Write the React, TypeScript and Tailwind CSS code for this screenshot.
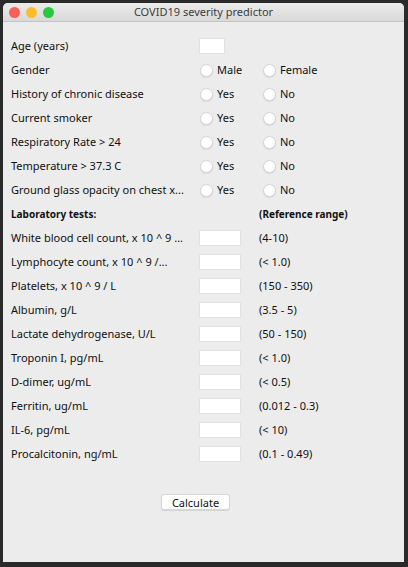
const YES_NO = [
  "History of chronic disease",
  "Current smoker",
  "Respiratory Rate > 24",
  "Temperature > 37.3 C",
  "Ground glass opacity on chest x...",
];

const LAB_TESTS: { label: string; range: string }[] = [
  { label: "White blood cell count, x 10 ^ 9 ...", range: "(4-10)" },
  { label: "Lymphocyte count, x 10 ^ 9 /...", range: "(< 1.0)" },
  { label: "Platelets, x 10 ^ 9 / L", range: "(150 - 350)" },
  { label: "Albumin, g/L", range: "(3.5 - 5)" },
  { label: "Lactate dehydrogenase, U/L", range: "(50 - 150)" },
  { label: "Troponin I, pg/mL", range: "(< 1.0)" },
  { label: "D-dimer, ug/mL", range: "(< 0.5)" },
  { label: "Ferritin, ug/mL", range: "(0.012 - 0.3)" },
  { label: "IL-6, pg/mL", range: "(< 10)" },
  { label: "Procalcitonin, ng/mL", range: "(0.1 - 0.49)" },
];

function Radio({ label }: { label: string }) {
  return (
    <div className="flex items-center w-[63px]">
      <span className="w-[13px] h-[13px] rounded-full bg-white border border-[#d4d4d4] shadow-[0_1px_1px_rgba(0,0,0,0.08)] shrink-0" />
      <span className="ml-[4px]">{label}</span>
    </div>
  );
}

function Row({ label, bold, children }: { label: string; bold?: boolean; children?: React.ReactNode }) {
  return (
    <div className="flex items-center h-[24px]">
      <div className={`w-[188px] shrink-0 whitespace-nowrap ${bold ? "font-bold text-[10px]" : ""}`}>{label}</div>
      {children}
    </div>
  );
}

function TextBox({ w }: { w: string }) {
  return <div className={`${w} h-[16px] bg-white border border-[#e2e2e2]`} />;
}

export default function App() {
  return (
    <div
      className="w-[408px] h-[567px] bg-[#2a2a2a] pt-[3px] pl-[3px] overflow-hidden"
      style={{ fontFamily: '"Noto Sans", "DejaVu Sans", sans-serif' }}
    >
      <div className="w-[401px] h-[559px] bg-[#ececec] rounded-t-[5px] overflow-hidden text-[11px] text-[#111]">
        {/* title bar */}
        <div className="relative h-[19px] bg-gradient-to-b from-[#ebebeb] to-[#d9d9d9] border-b border-[#c4c4c4] flex items-center justify-center">
          <div className="absolute left-[6px] top-[4px] flex gap-[6px]">
            <span className="w-[11px] h-[11px] rounded-full bg-[#fc5f57]" />
            <span className="w-[11px] h-[11px] rounded-full bg-[#fdbc2e]" />
            <span className="w-[11px] h-[11px] rounded-full bg-[#29c840]" />
          </div>
          <span className="text-[11px] text-[#3c3c3c]">COVID19 severity predictor</span>
        </div>

        <div className="pl-[8px] pt-[12px]">
          <Row label="Age (years)">
            <TextBox w="w-[26px]" />
          </Row>
          <Row label="Gender">
            <div className="ml-[1px] flex">
              <Radio label="Male" />
              <Radio label="Female" />
            </div>
          </Row>
          {YES_NO.map((q) => (
            <Row key={q} label={q}>
              <div className="ml-[1px] flex">
                <Radio label="Yes" />
                <Radio label="No" />
              </div>
            </Row>
          ))}
          <Row label="Laboratory tests:" bold>
            <div className="ml-[60px] font-bold text-[10px]">(Reference range)</div>
          </Row>
          {LAB_TESTS.map((t) => (
            <Row key={t.label} label={t.label}>
              <TextBox w="w-[42px]" />
              <div className="ml-[18px]">{t.range}</div>
            </Row>
          ))}

          <div className="mt-[28px] flex">
            <button className="ml-[150px] w-[69px] h-[16px] bg-white rounded-[3px] border border-[#d6d6d6] shadow-[0_1px_1px_rgba(0,0,0,0.1)] text-[11px] leading-none">
              Calculate
            </button>
          </div>
        </div>
      </div>
    </div>
  );
}
